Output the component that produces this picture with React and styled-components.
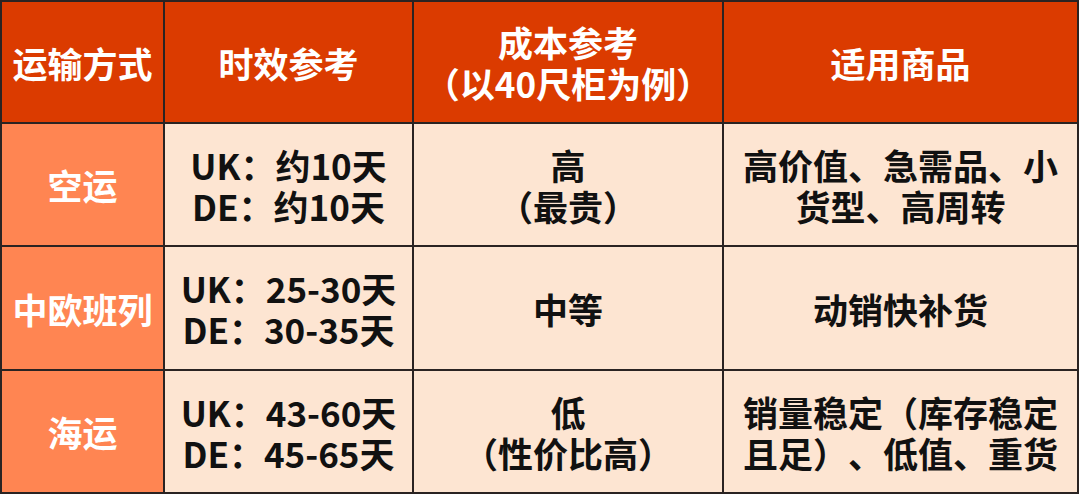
import React from "react";
import styled, { createGlobalStyle } from "styled-components";

const GlobalStyle = createGlobalStyle`
  html, body {
    margin: 0;
    padding: 0;
    background: #ffffff;
  }
  body {
    font-family: "Noto Sans CJK SC", "Noto Sans", sans-serif;
  }
`;

const Table = styled.div`
  display: grid;
  grid-template-columns: 161px 247px 308px 353px;
  grid-template-rows: 120px 121px 122px 121px;
  gap: 2px;
  padding: 2px;
  width: max-content;
  background: #2a2322;
`;

const Cell = styled.div`
  display: flex;
  align-items: center;
  justify-content: center;
  text-align: center;
  font-size: 35px;
  line-height: 41px;
  font-weight: 700;
  padding: 0 4px;
  text-spacing-trim: space-all;
  white-space: nowrap;
  background: ${(p) =>
    p.$kind === "head" ? "#db3b00" : p.$kind === "side" ? "#ff8552" : "#fde5d2"};
  color: ${(p) => (p.$kind === "body" ? "#111111" : "#ffffff")};
`;

const Line = styled.div`
  display: block;
`;

const columns = ["运输方式", "时效参考", ["成本参考", "（以40尺柜为例）"], "适用商品"];

const rows = [
  {
    mode: "空运",
    time: ["UK：约10天", "DE：约10天"],
    cost: ["高", "（最贵）"],
    goods: ["高价值、急需品、小", "货型、高周转"],
  },
  {
    mode: "中欧班列",
    time: ["UK：25-30天", "DE：30-35天"],
    cost: ["中等"],
    goods: ["动销快补货"],
  },
  {
    mode: "海运",
    time: ["UK：43-60天", "DE：45-65天"],
    cost: ["低", "（性价比高）"],
    goods: ["销量稳定（库存稳定", "且足）、低值、重货"],
  },
];

const Lines = ({ lines }) => {
  const list = Array.isArray(lines) ? lines : [lines];
  return (
    <div>
      {list.map((l, i) => (
        <Line key={i}>{l}</Line>
      ))}
    </div>
  );
};

const App = () => {
  return (
    <>
      <GlobalStyle />
      <Table>
        {columns.map((c, i) => (
          <Cell key={i} $kind="head">
            <Lines lines={c} />
          </Cell>
        ))}
        {rows.map((r) => (
          <React.Fragment key={r.mode}>
            <Cell $kind="side">{r.mode}</Cell>
            <Cell $kind="body">
              <Lines lines={r.time} />
            </Cell>
            <Cell $kind="body">
              <Lines lines={r.cost} />
            </Cell>
            <Cell $kind="body">
              <Lines lines={r.goods} />
            </Cell>
          </React.Fragment>
        ))}
      </Table>
    </>
  );
};

export default App;
